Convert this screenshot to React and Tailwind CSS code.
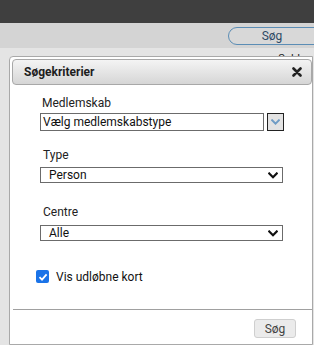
import React from 'react';

const font = { fontFamily: 'Roboto, "Noto Sans", Arial, sans-serif' };

const Chevron = ({ color = '#111', size = 10 }) => (
  <svg width={size} height={size * 0.7} viewBox="0 0 12 8">
    <path d="M1.5 1.5 L6 6 L10.5 1.5" fill="none" stroke={color} strokeWidth="2.6" strokeLinecap="square" />
  </svg>
);

const SelectBox = ({ value }) => (
  <div className="flex items-center justify-between h-[16px] w-[243px] border border-[#6b6b6b] bg-white pl-[8px] pr-[4px]">
    <span className="text-[12px] leading-none text-[#111]">{value}</span>
    <Chevron />
  </div>
);

export default function App() {
  return (
    <div className="relative w-[314px] h-[345px] overflow-hidden bg-[#e4e4e4] flex flex-col" style={font}>
      {/* top bar */}
      <div className="h-[23px] bg-[#3f3f3f] shrink-0" />
      {/* toolbar */}
      <div className="h-[25px] bg-[#d4d4d4] shrink-0 flex items-center justify-end">
        <button className="h-[18px] w-[96px] -mr-[10px] rounded-full border border-[#5b8db5] bg-[#d8d8d8] text-[12px] text-[#2f4a66] pr-[8px] leading-none">
          Søg
        </button>
      </div>
      <div className="relative flex-1 pl-[9px] pt-[8px]">
        <span className="absolute right-[14px] top-[5px] text-[11px] text-[#222] leading-none">Sold</span>
        {/* dialog */}
        <div className="relative h-full w-[304px] rounded-tl-[4px] border border-[#a9a9a9] bg-white pt-[2px] pl-[2px] flex flex-col">
          <div className="h-[26px] w-[300px] rounded-[4px] border border-[#a8a8a8] bg-gradient-to-b from-[#f4f4f4] to-[#d6d6d6] flex items-center justify-between pl-[11px] pr-[9px]">
            <span className="text-[12px] font-bold text-[#1e1e1e] leading-none">Søgekriterier</span>
            <svg width="10" height="10" viewBox="0 0 10 10">
              <path d="M1.5 1.5 L8.5 8.5 M8.5 1.5 L1.5 8.5" stroke="#222" strokeWidth="2.6" strokeLinecap="round" />
            </svg>
          </div>
          <div className="flex flex-col pl-[28px] pt-[12px]">
            <label className="text-[12px] leading-none text-[#222] ml-[2px] h-[14px]">Medlemskab</label>
            <div className="flex items-center gap-[3px] mt-[2px]">
              <div className="flex items-center h-[18px] w-[224px] border border-[#6b6b6b] bg-white pl-[2px]">
                <span className="text-[12px] leading-none text-[#111]">Vælg medlemskabstype</span>
              </div>
              <div className="h-[18px] w-[17px] border border-[#222] bg-[#e3e3e3] flex items-center justify-center">
                <Chevron color="#6f9cc5" size={9} />
              </div>
            </div>
            <label className="text-[12px] leading-none text-[#222] ml-[3px] mt-[18px] h-[14px]">Type</label>
            <div className="mt-[4px]">
              <SelectBox value="Person" />
            </div>
            <label className="text-[12px] leading-none text-[#222] ml-[3px] mt-[23px] h-[14px]">Centre</label>
            <div className="mt-[5px]">
              <SelectBox value="Alle" />
            </div>
            <div className="flex items-center gap-[7px] mt-[29px] -ml-[4px] h-[13px]">
              <div className="w-[13px] h-[13px] rounded-[2px] bg-[#1a73e8] flex items-center justify-center">
                <svg width="10" height="10" viewBox="0 0 10 10">
                  <path d="M1.5 5.2 L4 7.6 L8.6 2.4" fill="none" stroke="#fff" strokeWidth="1.8" />
                </svg>
              </div>
              <span className="text-[12px] leading-none text-[#111]">Vis udløbne kort</span>
            </div>
          </div>
          <div className="mt-[26px] h-px bg-[#a0a0a0] ml-[1px]" />
          <div className="flex justify-end pr-[16px] pt-[9px]">
            <button className="h-[19px] w-[42px] rounded-[3px] border border-[#cfcfcf] bg-[#ebebeb] text-[12px] text-[#444] leading-none">
              Søg
            </button>
          </div>
        </div>
      </div>
    </div>
  );
}
